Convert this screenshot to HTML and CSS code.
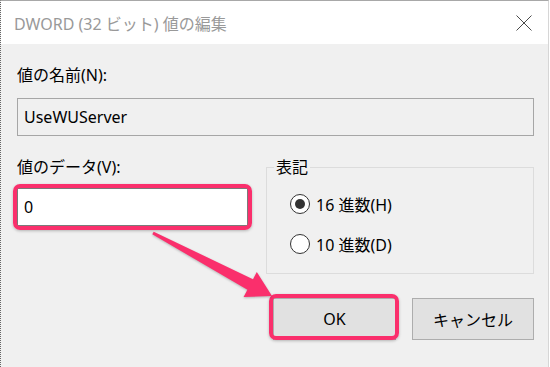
FILE: index.html
```html
<!DOCTYPE html>
<html lang="ja">
<head>
    <meta charset="UTF-8">
    <meta name="viewport" content="width=device-width, initial-scale=1.0">
    <title>DWORD (32 ビット) 値の編集</title>
    <link rel="stylesheet" href="styles.css">
</head>
<body>
    <div class="dialog">
        <div class="titlebar">
            <span class="title">DWORD (32 ビット) 値の編集</span>
            <svg class="close" width="16" height="16" viewBox="0 0 16 16">
                <path d="M0.5 0.5 L15.5 15.5 M15.5 0.5 L0.5 15.5" stroke="#4a4a4a" stroke-width="1" fill="none"/>
            </svg>
        </div>

        <div class="content">
            <div class="label">値の名前(N):</div>
            <div class="name-box">UseWUServer</div>

            <div class="value-row">
                <div class="data-col">
                    <div class="label">値のデータ(V):</div>
                    <div class="data-box mark">0</div>
                </div>

                <fieldset class="base-group">
                    <legend>表記</legend>
                    <div class="radio-list">
                        <div class="radio-item">
                            <span class="radio checked"></span>
                            <span>16 進数(H)</span>
                        </div>
                        <div class="radio-item">
                            <span class="radio"></span>
                            <span>10 進数(D)</span>
                        </div>
                    </div>
                </fieldset>
            </div>

            <div class="buttons">
                <button class="btn mark mark-btn">OK</button>
                <button class="btn">キャンセル</button>
            </div>
        </div>

        <!-- annotation arrow: data box -> OK -->
        <svg class="arrow" width="550" height="367" viewBox="0 0 550 367">
            <polygon points="153.7,231.7 253,279.2 256.8,272.1 272,296 243.6,296.9 247.4,289.8 152.3,234.3" fill="#fa2f6c"/>
        </svg>
    </div>
</body>
</html>
```

FILE: styles.css
```css
* {
    margin: 0;
    padding: 0;
    box-sizing: border-box;
}

body {
    background: #ffffff;
    font-family: 'Segoe UI', 'Noto Sans', 'Noto Sans CJK JP', sans-serif;
    font-size: 16px;
    color: #000;
}

.dialog {
    position: relative;
    width: 549px;
    height: 367px;
    background: #f0f0f0;
    border-left: 1px dotted #666;
    border-right: 1px solid #d6d6d6;
    border-top: 1px solid #a8a8a8;
}

.titlebar {
    height: 43px;
    background: #ffffff;
    display: flex;
    align-items: center;
    justify-content: space-between;
    padding: 0 16px 0 13px;
}

.title {
    color: #999999;
    font-size: 16px;
    margin-top: 1px;
}

.close {
    display: block;
    margin-top: 1px;
}

.content {
    padding: 20px 14px 0 16px;
}

.label {
    line-height: 22px;
    height: 22px;
}

.name-box {
    margin-top: 12px;
    height: 38px;
    border: 1px solid #a6a6a6;
    display: flex;
    align-items: center;
    padding-left: 6px;
}

.value-row {
    margin-top: 20px;
    display: grid;
    grid-template-columns: 231px 1fr;
    column-gap: 18px;
}

.data-box {
    margin-top: 10px;
    height: 38px;
    background: #ffffff;
    border: 1px solid #7a7a7a;
    display: flex;
    align-items: center;
    padding-left: 6px;
}

.mark {
    position: relative;
}

.mark::after {
    content: "";
    position: absolute;
    top: -5px;
    left: -5px;
    right: -5px;
    bottom: -5px;
    border: 4px solid #fa2f6c;
    border-radius: 7px;
    box-shadow: 0 1px 3px rgba(0, 0, 0, 0.25);
}

.base-group {
    border: 1px solid #dcdcdc;
    height: 118px;
    padding: 0 0 0 23px;
}

.base-group legend {
    margin-left: -16px;
    padding: 0 2px;
    line-height: 22px;
}

.radio-list {
    margin-top: 15px;
    display: flex;
    flex-direction: column;
    gap: 18px;
}

.radio-item {
    display: flex;
    align-items: center;
    gap: 6px;
    height: 22px;
}

.radio {
    width: 20px;
    height: 20px;
    border: 1px solid #333;
    border-radius: 50%;
    background: #fff;
    display: flex;
    align-items: center;
    justify-content: center;
}

.radio.checked::before {
    content: "";
    width: 10px;
    height: 10px;
    border-radius: 50%;
    background: #333;
}

.buttons {
    margin-top: 24px;
    display: flex;
    justify-content: flex-end;
    gap: 16px;
}

.btn {
    width: 122px;
    height: 42px;
    background: #e1e1e1;
    border: 1px solid #adadad;
    font-family: inherit;
    font-size: 16px;
    color: #000;
}

.mark-btn {
    width: 123px;
}

.mark-btn::after {
    top: -5px;
    left: -5px;
    right: -4px;
    bottom: -1px;
}

.arrow {
    position: absolute;
    top: -1px;
    left: -1px;
    pointer-events: none;
    filter: drop-shadow(0 1px 1px rgba(0, 0, 0, 0.25));
}
```
